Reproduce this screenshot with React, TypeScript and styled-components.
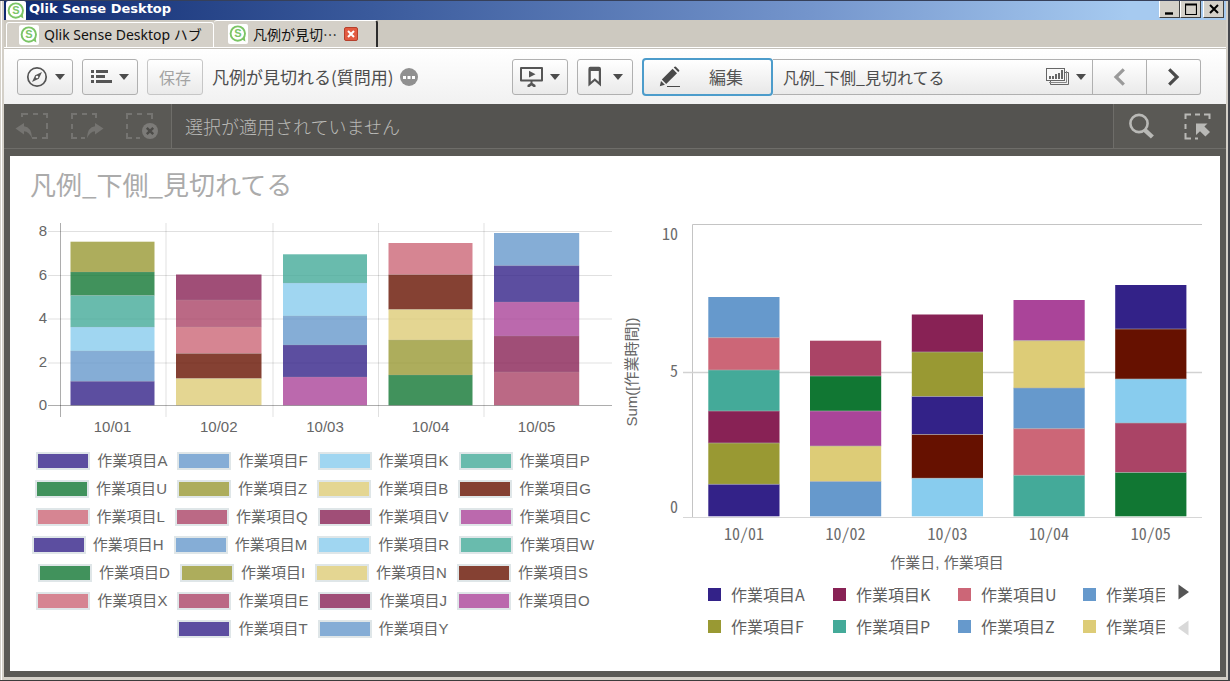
import React from "react";
import styled, { createGlobalStyle } from "styled-components";

const jp = '"Noto Sans CJK JP", sans-serif';
const arial = '"Liberation Sans", "Noto Sans CJK JP", sans-serif';
const mono = '"Noto Sans Mono CJK JP", "DejaVu Sans Mono", "Noto Sans CJK JP", monospace';

const palette = {
  indigo: "#332288",
  blue: "#6699cc",
  sky: "#88ccee",
  teal: "#44aa99",
  green: "#117733",
  olive: "#999933",
  sand: "#ddcc77",
  brown: "#661100",
  rose: "#cc6677",
  dusty: "#aa4466",
  plum: "#882255",
  magenta: "#aa4499",
};
type Hue = keyof typeof palette;

const Global = createGlobalStyle`
  *, *::before, *::after { box-sizing: border-box; }
  body { margin: 0; background: #5a5955; font-family: ${jp}; color: #595959; }
  button { margin: 0; padding: 0; font: inherit; color: inherit; cursor: pointer; }
  ul, h1, h2 { margin: 0; padding: 0; list-style: none; font-weight: 400; }
  svg { display: block; }
`;

/* ---------- window ---------- */

const Window = styled.div`
  min-height: 100vh;
  display: flex;
  flex-direction: column;
  border-top: 1px solid #36405a;
  border-right: 2px solid #44464c;
  border-bottom: 1px solid #3c3c3c;
  background: #d4d0c8;
`;

const Inner = styled.div`
  flex: 1;
  display: flex;
  flex-direction: column;
  margin: 0 0 0 1px;
  padding: 0 2px 3px 2px;
  border-left: 1px solid #fff;
`;

const TitleBar = styled.header`
  display: flex;
  align-items: flex-start;
  height: 19px;
  padding: 0 2px 0 2px;
  background: linear-gradient(90deg, #0f2a70 0%, #3a5a9c 30%, #7495cc 66%, #a6caf0 92%);
  overflow: hidden;
`;

const AppName = styled.span`
  flex: 1;
  margin-left: 3px;
  font: 700 13px/16px "DejaVu Sans", sans-serif;
  color: #fff;
`;

const LogoBox = styled.span<{ $size: number }>`
  flex: none;
  width: ${(p) => p.$size}px;
  height: ${(p) => p.$size}px;
  border-radius: 2px;
  background: #fff;
`;

const WinButton = styled.button<{ $gap?: boolean }>`
  display: grid;
  place-items: center;
  width: 21px;
  height: 17px;
  margin-left: ${(p) => (p.$gap ? 2 : 0)}px;
  border: 1px solid;
  border-color: #fff #404040 #404040 #fff;
  border-top: 0;
  background: #d4d0c8;
`;

const TabStrip = styled.nav`
  display: flex;
  align-items: flex-end;
  height: 28px;
  padding-left: 2px;
  background: #cdc9c0;
  border-bottom: 1px solid #fff;
`;

const Tab = styled.button<{ $active?: boolean }>`
  display: flex;
  align-items: center;
  gap: 5px;
  height: ${(p) => (p.$active ? 27 : 25)}px;
  width: ${(p) => (p.$active ? 164 : 208)}px;
  padding-left: ${(p) => (p.$active ? 14 : 12)}px;
  padding-bottom: 1px;
  border: 0 solid #fff;
  border-width: 1px 1px 0 1px;
  border-right-color: ${(p) => (p.$active ? "#2c2c2c" : "#fff")};
  border-right-width: ${(p) => (p.$active ? 2 : 1)}px;
  border-left-width: ${(p) => (p.$active ? 0 : 1)}px;
  border-radius: 3px 3px 0 0;
  background: #d4d0c8;
  color: #111;
  font: 14px/22px ${(p) => (p.$active ? jp : `"Noto Sans", ${jp}`)};
  white-space: nowrap;
`;

const TabClose = styled.span`
  display: grid;
  place-items: center;
  width: 14px;
  height: 14px;
  margin-left: 2px;
  border: 1px solid #b5402c;
  border-radius: 2px;
  background: #e25b41;
`;

/* ---------- toolbar ---------- */

const Toolbar = styled.div`
  display: flex;
  align-items: center;
  height: 56px;
  padding: 0 25px 0 13px;
  border-top: 1px solid #c4c1ba;
  background: linear-gradient(#fff, #f1f1f1);
`;

const ToolButton = styled.button<{ $muted?: boolean; $wide?: boolean }>`
  display: flex;
  align-items: center;
  justify-content: center;
  gap: ${(p) => (p.$wide ? 11 : 7)}px;
  width: 56px;
  height: 36px;
  margin-right: 9px;
  border: 1px solid ${(p) => (p.$muted ? "#c6c6c6" : "#b0b0b0")};
  border-radius: 3px;
  background: linear-gradient(#fff, #eaeaea);
  color: ${(p) => (p.$muted ? "#a3a3a3" : "#555")};
  font-size: 16px;
`;

const AppTitle = styled.h1`
  flex: 1;
  display: flex;
  align-items: center;
  gap: 6px;
  font-size: 17px;
  line-height: 24px;
  color: #4d4d4d;
  white-space: nowrap;
`;

const EditButton = styled.button`
  display: flex;
  align-items: center;
  gap: 28px;
  width: 131px;
  height: 38px;
  padding-left: 15px;
  border: 2px solid #4c9ccb;
  border-radius: 4px;
  background: linear-gradient(#fff, #e8e8e8);
  color: #555;
  font-size: 17px;
`;

const SheetGroup = styled.div`
  display: flex;
  width: 428px;
  height: 36px;
  border: 1px solid #b0b0b0;
  border-left: 0;
  border-radius: 0 3px 3px 0;
  background: linear-gradient(#fff, #eaeaea);
`;

const SheetButton = styled.button`
  flex: 1;
  display: flex;
  align-items: center;
  gap: 7px;
  padding: 0 6px 0 10px;
  border: 0;
  background: none;
  color: #4d4d4d;
  font-size: 16px;
`;

const SheetName = styled.span`
  flex: 1;
  text-align: left;
`;

const StepButton = styled.button`
  display: grid;
  place-items: center;
  width: 54px;
  border: 0;
  border-left: 1px solid #b0b0b0;
  background: none;
`;

/* ---------- selections bar ---------- */

const Selections = styled.div`
  display: flex;
  height: 45px;
  margin-bottom: 7px;
  border-bottom: 1px solid #6e6d69;
`;

const SelectionTools = styled.div<{ $side: "left" | "right" }>`
  display: flex;
  align-items: center;
  gap: ${(p) => (p.$side === "left" ? 21 : 29)}px;
  padding: ${(p) => (p.$side === "left" ? "0 12px 0 11px" : "0 15px 0 13px")};
  border: 0 solid #6e6d69;
  border-right-width: ${(p) => (p.$side === "left" ? 1 : 0)}px;
  border-left-width: ${(p) => (p.$side === "right" ? 1 : 0)}px;
`;

const BarButton = styled.button`
  border: 0;
  background: none;
`;

const SelectionText = styled.p`
  flex: 1;
  margin: 0;
  padding-left: 13px;
  background: #545350;
  color: #b9b9b6;
  font-size: 18px;
  font-weight: 300;
  line-height: 44px;
`;

/* ---------- sheet ---------- */

const Stage = styled.main`
  flex: 1;
  display: flex;
  flex-direction: column;
  padding: 0 6px 6px;
  background: #5a5955;
`;

const Bleed = styled.div`
  margin: 0 -6px;
`;

const Sheet = styled.section`
  flex: 1;
  padding: 11px 18px 24px 20px;
  background: #fff;
`;

const SheetTitle = styled.h2`
  margin-bottom: 19px;
  font-size: 26px;
  line-height: 34px;
  color: #ababab;
`;

const Charts = styled.div`
  display: grid;
  grid-template-columns: repeat(2, minmax(0, 1fr));
  gap: 8px;
`;

const Plot = styled.svg`
  width: 100%;
  height: auto;
`;

const AxisText = styled.text`
  font: 15px ${arial};
  fill: #666;
`;

const MonoText = styled.text`
  font: 16px ${mono};
  font-feature-settings: "zero" 1;
  fill: #6b6b6b;
`;

const LegendRows = styled.div`
  padding: 7px 16px 0 0;
`;

const LegendRow = styled.ul`
  display: flex;
  justify-content: center;
  gap: 10px;
  font: 15px/28px ${arial};
  color: #666;
`;

const LegendItem = styled.li`
  display: flex;
  align-items: center;
  gap: 7px;
  white-space: nowrap;
`;

const WideSwatch = styled.span<{ $hue: Hue }>`
  width: 54px;
  height: 18px;
  border: 2px solid #dfe6e8;
  background: ${(p) => palette[p.$hue]}cc;
  background-clip: padding-box;
`;

const PagedLegend = styled.div`
  display: flex;
  padding-left: 88px;
`;

const LegendGrid = styled.ul`
  flex: 1;
  min-width: 0;
  display: grid;
  grid-template-columns: repeat(4, 125px);
  overflow: hidden;
  font: 16px/32px ${jp};
  color: #5f5f5f;
`;

const GridItem = styled.li`
  display: flex;
  align-items: center;
  gap: 10px;
  white-space: nowrap;
`;

const SmallSwatch = styled.span<{ $hue: Hue }>`
  width: 13px;
  height: 13px;
  background: ${(p) => palette[p.$hue]};
`;

const Pager = styled.div`
  flex: none;
  display: flex;
  flex-direction: column;
  justify-content: space-between;
  align-items: flex-start;
  width: 37px;
  padding: 6px 0 6px 13px;
`;

/* ---------- icons ---------- */

const Logo = ({ size }: { size: number }) => (
  <LogoBox $size={size}>
    <svg width={size} height={size} viewBox="0 0 20 20" aria-hidden="true">
      <circle cx="9.8" cy="9.6" r="7.2" fill="none" stroke="#7cc566" strokeWidth="1.9" />
      <path d="M13.6 15.2 L17.4 17.6 L16.6 12.6" fill="#7cc566" />
      <text x="9.8" y="13.4" textAnchor="middle" fontFamily="Liberation Sans, sans-serif" fontWeight="700" fontSize="11" fill="#7cc566">S</text>
    </svg>
  </LogoBox>
);

const Caret = () => (
  <svg width="10" height="6" viewBox="0 0 10 6" aria-hidden="true">
    <path d="M0 0 H10 L5 6 Z" fill="#4c4c4c" />
  </svg>
);

const Compass = () => (
  <svg width="22" height="22" viewBox="0 0 22 22" aria-hidden="true">
    <circle cx="11" cy="11" r="9.2" fill="none" stroke="#555" strokeWidth="1.7" />
    <path d="M16 6 L12.8 12.7 L6 16 L9.2 9.3 Z" fill="#555" />
    <circle cx="11" cy="11" r="1.3" fill="#f6f6f6" />
  </svg>
);

const ListIcon = () => (
  <svg width="21" height="15" viewBox="0 0 21 15" aria-hidden="true">
    <path d="M0 1 H3 V4 H0 Z M0 6 H3 V9 H0 Z M0 11 H3 V14 H0 Z M5 1 H17 V4 H5 Z M5 6 H14 V9 H5 Z M5 11 H21 V14 H5 Z" fill="#555" />
  </svg>
);

const Present = () => (
  <svg width="23" height="20" viewBox="0 0 23 20" aria-hidden="true">
    <path d="M1 1 H22 V13.5 H1 Z" fill="none" stroke="#555" strokeWidth="2" strokeLinejoin="round" />
    <path d="M9 3.8 L15.5 7.2 L9 10.6 Z" fill="#555" />
    <path d="M10.5 14 H12.5 V16 L15.5 18 V20 H13.5 L11.5 18.4 L9.5 20 H7.5 V18 L10.5 16 Z" fill="#555" />
  </svg>
);

const Bookmark = () => (
  <svg width="15" height="21" viewBox="0 0 15 21" aria-hidden="true">
    <path d="M3.2 0.8 H12 Q14 0.8 14 3 V20.4 L7.8 15 L1.4 20.4 V3 Q1.4 0.8 3.2 0.8 Z" fill="#555" />
    <path d="M3.8 5 H11.8 V15.8 L7.8 12.2 L3.8 15.8 Z" fill="#f7f7f7" />
  </svg>
);

const Pencil = () => (
  <svg width="22" height="22" viewBox="0 0 22 22" aria-hidden="true">
    <path d="M13.6 2.8 L18 7.2 L7.2 18 L2.8 13.6 Z" fill="#4a4a4a" />
    <path d="M14.7 1.6 L15.6 0.7 Q16.2 0.1 16.9 0.7 L20.1 3.9 Q20.7 4.5 20.1 5.2 L19.2 6.1 Z" fill="#4a4a4a" />
    <path d="M2 14.9 L5.9 18.7 L0.8 20.2 Z" fill="#4a4a4a" />
    <path d="M8 20.5 H21" stroke="#4a4a4a" strokeWidth="1" />
  </svg>
);

const SheetIcon = () => (
  <svg width="23" height="17" viewBox="0 0 23 17" aria-hidden="true">
    <path d="M4.5 13 V16.5 H22.5 V4.5 H19" fill="none" stroke="#666" />
    <path d="M20.5 3 V14.5 H3" fill="none" stroke="#888" />
    <rect x="0.5" y="0.5" width="18" height="12" fill="#f8f8f8" stroke="#666" />
    <path d="M3 8 H5 V11 H3 Z M6 8 H8 V11 H6 Z M9 6 H11 V11 H9 Z M12 5 H14 V11 H12 Z M15 2 H17 V11 H15 Z" fill="#666" />
  </svg>
);

const Chevron = ({ dir, color }: { dir: "left" | "right"; color: string }) => (
  <svg width="13" height="18" viewBox="0 0 13 18" aria-hidden="true">
    <path d={dir === "left" ? "M10.8 1.4 L3 9 L10.8 16.6" : "M2.2 1.4 L10 9 L2.2 16.6"} fill="none" stroke={color} strokeWidth="3.2" />
  </svg>
);

const MoreDots = () => (
  <svg width="18" height="18" viewBox="0 0 18 18" aria-hidden="true">
    <circle cx="9" cy="9" r="9" fill="#909090" />
    <path d="M3 8 H6 V11 H3 Z M7.5 8 H10.5 V11 H7.5 Z M12 8 H15 V11 H12 Z" fill="#fff" />
  </svg>
);

const BackSel = () => (
  <svg width="34" height="28" viewBox="0 0 34 28" aria-hidden="true">
    <path d="M7 5 V2 H13 M18 2 H23 M28 2 H32 V6 M32 11 V17 M32 21 V26 H27 M22 26 H17" fill="none" stroke="#757471" strokeWidth="2" />
    <path d="M0.5 16.5 L9 11 V14.3 Q16.5 15 17.2 26.5 Q14 19.6 9 19.2 V22.4 Z" fill="#757471" />
  </svg>
);

const ForwardSel = () => (
  <svg width="34" height="28" viewBox="0 0 34 28" aria-hidden="true">
    <path d="M2 7 V2 H7 M12 2 H17 M22 2 H26 V6 M2 12 V17 M2 21 V26 H7 M11 26 H15" fill="none" stroke="#757471" strokeWidth="2" />
    <path d="M33.5 16.5 L25 11 V14.3 Q17.5 15 16.8 26.5 Q20 19.6 25 19.2 V22.4 Z" fill="#757471" />
  </svg>
);

const ClearSel = () => (
  <svg width="34" height="28" viewBox="0 0 34 28" aria-hidden="true">
    <path d="M2 7 V2 H7 M12 2 H17 M22 2 H27 V7 M2 12 V17 M2 21 V26 H7 M11 26 H15" fill="none" stroke="#757471" strokeWidth="2" />
    <circle cx="25" cy="19" r="8" fill="#7c7b78" />
    <path d="M21.8 15.8 L28.2 22.2 M28.2 15.8 L21.8 22.2" stroke="#4d4c49" strokeWidth="2.4" />
  </svg>
);

const Search = () => (
  <svg width="28" height="26" viewBox="0 0 28 26" aria-hidden="true">
    <circle cx="12" cy="10.5" r="8.6" fill="none" stroke="#b9b9b6" strokeWidth="2.6" />
    <path d="M17.6 16.8 L25.4 24" stroke="#b9b9b6" strokeWidth="4.4" />
  </svg>
);

const SelectionTool = () => (
  <svg width="27" height="27" viewBox="0 0 27 27" aria-hidden="true">
    <path d="M1.5 6 V1.5 H7 M11 1.5 H16 M20 1.5 H25.5 V6 M1.5 11 V16 M1.5 20 V25.5 H7 M11 25.5 H14" fill="none" stroke="#b9b9b6" strokeWidth="2" />
    <path d="M12 10.5 H23.5 L20.4 13.6 L26 19 L21.4 23.6 L16 18.2 L12 22 Z" fill="#b9b9b6" />
  </svg>
);

/* ---------- chart data ---------- */

type Bar = { label: string; x: number; w: number; edges: number[]; hues: Hue[] };

const leftBars: Bar[] = [
  { label: "10/01", x: 70.5, w: 84, edges: [241.7, 272, 295.5, 327, 351, 381.3, 405.3], hues: ["olive", "green", "teal", "sky", "blue", "indigo"] },
  { label: "10/02", x: 176, w: 85.5, edges: [274.5, 300, 327, 353.5, 378.5, 405.3], hues: ["plum", "dusty", "rose", "brown", "sand"] },
  { label: "10/03", x: 283, w: 84, edges: [254.3, 283, 316, 345, 377, 405.3], hues: ["teal", "sky", "blue", "indigo", "magenta"] },
  { label: "10/04", x: 388.5, w: 84, edges: [243, 274.7, 309.5, 340, 375, 405.3], hues: ["rose", "brown", "sand", "olive", "green"] },
  { label: "10/05", x: 494, w: 85.2, edges: [233, 265.7, 302, 336, 372, 405.3], hues: ["blue", "indigo", "magenta", "plum", "dusty"] },
];

const rightBars: Bar[] = [
  { label: "10/01", x: 708.3, w: 71.2, edges: [297, 337.7, 370, 411, 443, 484.3, 516.3], hues: ["blue", "rose", "teal", "plum", "olive", "indigo"] },
  { label: "10/02", x: 810, w: 71.2, edges: [340.7, 376, 411, 446, 481.5, 516.3], hues: ["dusty", "green", "magenta", "sand", "blue"] },
  { label: "10/03", x: 911.8, w: 71.2, edges: [314.5, 352, 396.5, 434.5, 478.3, 516.3], hues: ["plum", "olive", "indigo", "brown", "sky"] },
  { label: "10/04", x: 1013.5, w: 71.2, edges: [300, 340.7, 388, 428.7, 475.3, 516.3], hues: ["magenta", "sand", "blue", "rose", "teal"] },
  { label: "10/05", x: 1115.2, w: 71.2, edges: [285, 329, 379, 423, 472.5, 516.3], hues: ["indigo", "brown", "sky", "dusty", "green"] },
];

const leftLegend: [string, Hue][][] = [
  [["A", "indigo"], ["F", "blue"], ["K", "sky"], ["P", "teal"]],
  [["U", "green"], ["Z", "olive"], ["B", "sand"], ["G", "brown"]],
  [["L", "rose"], ["Q", "dusty"], ["V", "plum"], ["C", "magenta"]],
  [["H", "indigo"], ["M", "blue"], ["R", "sky"], ["W", "teal"]],
  [["D", "green"], ["I", "olive"], ["N", "sand"], ["S", "brown"]],
  [["X", "rose"], ["E", "dusty"], ["J", "plum"], ["O", "magenta"]],
  [["T", "indigo"], ["Y", "blue"]],
];

const rightLegend: [string, Hue][] = [
  ["A", "indigo"], ["K", "plum"], ["U", "rose"], ["", "blue"],
  ["F", "olive"], ["P", "teal"], ["Z", "blue"], ["", "sand"],
];

const Stack = ({ bar, opacity }: { bar: Bar; opacity: number }) => (
  <g>
    {bar.hues.map((hue, i) => (
      <rect key={i} x={bar.x} y={bar.edges[i]} width={bar.w} height={bar.edges[i + 1] - bar.edges[i]} fill={palette[hue]} fillOpacity={opacity} />
    ))}
    {bar.edges.slice(1, -1).map((y) => (
      <path key={y} d={`M${bar.x} ${y} h${bar.w}`} stroke="#b0b0b0" strokeOpacity={opacity < 1 ? 0.2 : 0.6} />
    ))}
  </g>
);

const LeftChart = () => (
  <div>
    <Plot viewBox="30 220 582 220" role="img" aria-label="作業時間">
      <path d="M48 231.5 H612 M48 275.5 H612 M48 319 H612 M48 363 H612 M166 223 V417 M273 223 V417 M378.5 223 V417 M484 223 V417" stroke="#000" strokeOpacity="0.12" fill="none" />
      {leftBars.map((b) => <Stack key={b.label} bar={b} opacity={0.8} />)}
      <path d="M48 405.5 H612 M60.5 223 V417" stroke="#000" strokeOpacity="0.32" fill="none" />
      {[8, 6, 4, 2, 0].map((v, i) => (
        <AxisText key={v} x="47" y={236 + i * 43.5} textAnchor="end">{v}</AxisText>
      ))}
      {leftBars.map((b) => (
        <AxisText key={b.label} x={b.x + b.w / 2} y="432" textAnchor="middle">{b.label}</AxisText>
      ))}
    </Plot>
    <LegendRows>
      {leftLegend.map((row, i) => (
        <LegendRow key={i}>
          {row.map(([name, hue]) => (
            <LegendItem key={name}>
              <WideSwatch $hue={hue} />
              作業項目{name}
            </LegendItem>
          ))}
        </LegendRow>
      ))}
    </LegendRows>
  </div>
);

const RightChart = () => (
  <div>
    <Plot viewBox="620 220 582 358" role="img" aria-label="Sum([作業時間])">
      <path d="M692.5 517 V224.5 H1202" stroke="#c4c4c4" fill="none" />
      <path d="M683 372.5 H1202" stroke="#d2d2d2" strokeWidth="1.5" fill="none" />
      <path d="M683 517.5 H1202" stroke="#d6d6d6" fill="none" />
      {rightBars.map((b) => <Stack key={b.label} bar={b} opacity={1} />)}
      <MonoText x="678" y="240" textAnchor="end">10</MonoText>
      <MonoText x="678" y="377" textAnchor="end">5</MonoText>
      <MonoText x="678" y="513" textAnchor="end">0</MonoText>
      {rightBars.map((b) => (
        <MonoText key={b.label} x={b.x + b.w / 2} y="540" textAnchor="middle">{b.label}</MonoText>
      ))}
      <AxisText transform="translate(637 372) rotate(-90)" textAnchor="middle">Sum([作業時間])</AxisText>
      <AxisText x="947" y="568" textAnchor="middle">作業日, 作業項目</AxisText>
    </Plot>
    <PagedLegend>
      <LegendGrid>
        {rightLegend.map(([name, hue], i) => (
          <GridItem key={i}>
            <SmallSwatch $hue={hue} />
            作業項目{name}
          </GridItem>
        ))}
      </LegendGrid>
      <Pager>
        <BarButton aria-label="次へ">
          <svg width="11" height="16" viewBox="0 0 11 16" aria-hidden="true"><path d="M0.5 0.5 L11 8 L0.5 15.5 Z" fill="#555" /></svg>
        </BarButton>
        <BarButton aria-label="前へ">
          <svg width="11" height="16" viewBox="0 0 11 16" aria-hidden="true"><path d="M10.5 0.5 L0 8 L10.5 15.5 Z" fill="#d9d9d9" /></svg>
        </BarButton>
      </Pager>
    </PagedLegend>
  </div>
);

export default function App() {
  return (
    <Window>
      <Global />
      <Inner>
        <TitleBar>
          <Logo size={20} />
          <AppName>Qlik Sense Desktop</AppName>
          <WinButton aria-label="最小化">
            <svg width="11" height="12" viewBox="0 0 11 12"><path d="M1 10.5 H9" stroke="#000" strokeWidth="2.4" /></svg>
          </WinButton>
          <WinButton aria-label="最大化">
            <svg width="12" height="12" viewBox="0 0 12 12"><path d="M0.5 1 H11.5 V11.5 H0.5 Z M0.5 2 H11.5" fill="none" stroke="#000" strokeWidth="1.2" /></svg>
          </WinButton>
          <WinButton $gap aria-label="閉じる">
            <svg width="10" height="10" viewBox="0 0 10 10"><path d="M1 1 L9 9 M9 1 L1 9" stroke="#000" strokeWidth="2" /></svg>
          </WinButton>
        </TitleBar>
        <TabStrip>
          <Tab>
            <Logo size={20} />
            Qlik Sense Desktop ハブ
          </Tab>
          <Tab $active>
            <Logo size={20} />
            凡例が見切…
            <TabClose>
              <svg width="8" height="8" viewBox="0 0 8 8" aria-hidden="true"><path d="M1 1 L7 7 M7 1 L1 7" stroke="#fff" strokeWidth="2" /></svg>
            </TabClose>
          </Tab>
        </TabStrip>
        <Toolbar>
          <ToolButton aria-label="ナビゲーション"><Compass /><Caret /></ToolButton>
          <ToolButton aria-label="メニュー"><ListIcon /><Caret /></ToolButton>
          <ToolButton $muted>保存</ToolButton>
          <AppTitle>凡例が見切れる(質問用)<MoreDots /></AppTitle>
          <ToolButton aria-label="ストーリー"><Present /><Caret /></ToolButton>
          <ToolButton $wide aria-label="ブックマーク"><Bookmark /><Caret /></ToolButton>
          <EditButton><Pencil />編集</EditButton>
          <SheetGroup>
            <SheetButton>
              <SheetName>凡例_下側_見切れてる</SheetName>
              <SheetIcon />
              <Caret />
            </SheetButton>
            <StepButton aria-label="前のシート"><Chevron dir="left" color="#9a9a9a" /></StepButton>
            <StepButton aria-label="次のシート"><Chevron dir="right" color="#4a4a4a" /></StepButton>
          </SheetGroup>
        </Toolbar>
        <Stage>
          <Bleed>
            <Selections>
              <SelectionTools $side="left">
                <BarButton aria-label="戻る"><BackSel /></BarButton>
                <BarButton aria-label="進む"><ForwardSel /></BarButton>
                <BarButton aria-label="クリア"><ClearSel /></BarButton>
              </SelectionTools>
              <SelectionText>選択が適用されていません</SelectionText>
              <SelectionTools $side="right">
                <BarButton aria-label="検索"><Search /></BarButton>
                <BarButton aria-label="選択ツール"><SelectionTool /></BarButton>
              </SelectionTools>
            </Selections>
          </Bleed>
          <Sheet>
            <SheetTitle>凡例_下側_見切れてる</SheetTitle>
            <Charts>
              <LeftChart />
              <RightChart />
            </Charts>
          </Sheet>
        </Stage>
      </Inner>
    </Window>
  );
}
